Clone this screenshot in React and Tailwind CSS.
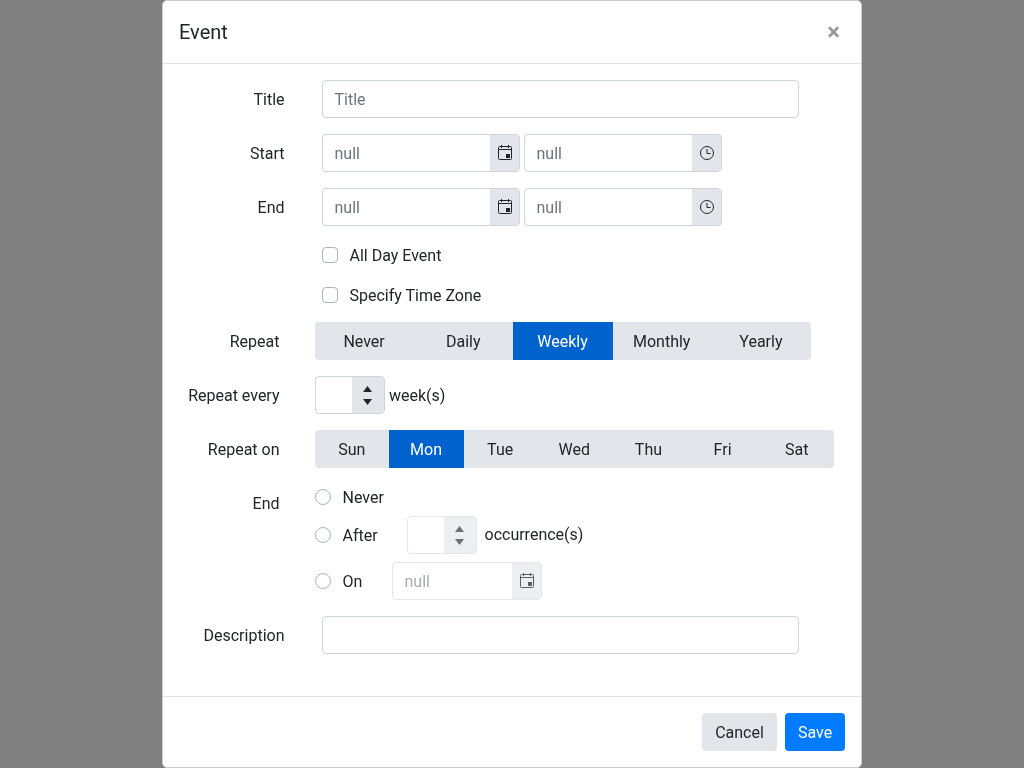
const CalendarIcon = () => (
  <svg width="14" height="16" viewBox="0 0 14 16" className="ml-px" fill="none" stroke="currentColor">
    <rect x="0.5" y="1.5" width="13" height="13" rx="1" />
    <path d="M0.5 4.5h13" />
    <path d="M3.5 0v3M10.5 0v3" />
    <rect x="8" y="9" width="4" height="4" fill="currentColor" stroke="none" />
  </svg>
);

const ClockIcon = () => (
  <svg width="16" height="16" viewBox="0 0 16 16" fill="none" stroke="currentColor">
    <circle cx="8" cy="8" r="6.5" />
    <path d="M8 4v4.5h3.5" />
  </svg>
);

const Spinner = ({ faded }) => (
  <div
    className={`w-8 flex flex-col items-center justify-center gap-[7px] pr-px ${
      faded ? "bg-[#eceef1] text-[#6c6f72]" : "bg-[#e2e6ea] text-[#212529]"
    }`}>
    <svg width="9" height="6" viewBox="0 0 9 6">
      <path d="M4.5 0L9 6H0z" fill="currentColor" />
    </svg>
    <svg width="9" height="6" viewBox="0 0 9 6">
      <path d="M4.5 6L0 0h9z" fill="currentColor" />
    </svg>
  </div>
);

const DateInput = ({ children, width = "w-[198px]", faded }) => (
  <div
    className={`${width} h-[38px] flex border rounded-[4px] overflow-hidden ${
      faded ? "border-[#e3e6ea]" : "border-[#ced4da]"
    }`}>
    <div className={`flex-1 pl-[11.5px] leading-[38px] ${faded ? "text-[#a6acb2]" : "text-[#6c757d]"}`}>null</div>
    <div
      className={`w-[29px] flex items-center justify-center ${
        faded ? "bg-[#eceef1] text-[#5c5f62]" : "bg-[#e2e6ea] text-[#212529]"
      }`}>
      {children}
    </div>
  </div>
);

const FormRow = ({ label, children }) => (
  <div className="flex items-center h-[38px] mb-4">
    <label className="w-[105.5px] text-right pt-[2px]">{label}</label>
    <div className="ml-[37.5px] flex items-center gap-1">{children}</div>
  </div>
);

const RepeatRow = ({ label, children }) => (
  <div className="flex items-center h-[38px] mb-4">
    <label className="w-[100.5px] text-right pt-[2px]">{label}</label>
    <div className="ml-[35.5px] flex items-center">{children}</div>
  </div>
);

const Segmented = ({ items, active, width }) => (
  <div className={`flex h-[38px] rounded-[4px] overflow-hidden ${width}`}>
    {items.map((item) => (
      <div
        key={item}
        className={`flex-1 flex items-center justify-center pt-[2px] pr-px ${
          item === active ? "bg-[#0062cc] text-white" : "bg-[#e2e6ea] text-[#212529]"
        }`}>
        {item}
      </div>
    ))}
  </div>
);

const CheckRow = ({ label }) => (
  <div className="flex items-center h-[25px] pt-px mb-[15px] ml-[143px]">
    <span className="w-4 h-4 rounded-[4px] border border-[#adb5bd] bg-white"></span>
    <span className="ml-[11.5px] pt-[2px]">{label}</span>
  </div>
);

const Radio = () => <span className="w-4 h-4 rounded-full border border-[#adb5bd] bg-white shrink-0"></span>;

export default function App() {
  return (
    <div className="h-screen overflow-hidden bg-[#808080] flex justify-center font-['Roboto',sans-serif] text-base text-[#212529]">
      <div className="w-[700px] h-[768px] bg-white border border-[#cccccc] rounded-[5px] flex flex-col [will-change:transform]">
        {/* Header */}
        <div className="h-[63px] shrink-0 flex items-center justify-between px-4 border-b border-[#dee2e6]">
          <h5 className="text-xl leading-6">Event</h5>
          <span className="text-2xl leading-none font-bold text-black opacity-40 mr-[5px] [text-shadow:0_1px_0_#fff]">×</span>
        </div>

        {/* Body */}
        <div className="flex-1 pt-4 px-4">
          <FormRow label="Title">
            <div className="w-[477px] h-[38px] border border-[#ced4da] rounded-[4px] pl-[11.5px] leading-[38px] text-[#6c757d]">
              Title
            </div>
          </FormRow>
          <FormRow label="Start">
            <DateInput>
              <CalendarIcon />
            </DateInput>
            <DateInput>
              <ClockIcon />
            </DateInput>
          </FormRow>
          <FormRow label="End">
            <DateInput>
              <CalendarIcon />
            </DateInput>
            <DateInput>
              <ClockIcon />
            </DateInput>
          </FormRow>
          <CheckRow label="All Day Event" />
          <CheckRow label="Specify Time Zone" />

          <RepeatRow label="Repeat">
            <Segmented items={["Never", "Daily", "Weekly", "Monthly", "Yearly"]} active="Weekly" width="w-[496px]" />
          </RepeatRow>
          <RepeatRow label="Repeat every">
            <div className="w-[70px] h-[38px] flex border border-[#ced4da] rounded-[4px] overflow-hidden">
              <div className="flex-1"></div>
              <Spinner />
            </div>
            <span className="ml-1 pt-[2px]">week(s)</span>
          </RepeatRow>
          <RepeatRow label="Repeat on">
            <div className="ml-[0.3px]">
              <Segmented items={["Sun", "Mon", "Tue", "Wed", "Thu", "Fri", "Sat"]} active="Mon" width="w-[519px]" />
            </div>
          </RepeatRow>

          <div className="flex mb-4">
            <label className="w-[100.5px] text-right leading-[40px]">End</label>
            <div className="ml-[35.5px] flex flex-col">
              <div className="h-[26px] flex items-center mb-[6px]">
                <Radio />
                <span className="ml-[11.5px] pt-[2px]">Never</span>
              </div>
              <div className="h-[38px] flex items-center mb-2">
                <Radio />
                <span className="ml-[11.5px] w-[64.5px] pt-[2px]">After</span>
                <div className="w-[70px] h-[38px] flex border border-[#e3e6ea] rounded-[4px] overflow-hidden">
                  <div className="flex-1"></div>
                  <Spinner faded />
                </div>
                <span className="ml-[7.5px]">occurrence(s)</span>
              </div>
              <div className="h-[38px] flex items-center">
                <Radio />
                <span className="ml-[11.5px] w-[49.5px] pt-[2px]">On</span>
                <DateInput width="w-[150px]" faded>
                  <CalendarIcon />
                </DateInput>
              </div>
            </div>
          </div>

          <FormRow label="Description">
            <div className="w-[477px] h-[38px] border border-[#ced4da] rounded-[4px]"></div>
          </FormRow>
        </div>

        {/* Footer */}
        <div className="shrink-0 border-t border-[#dee2e6] p-4 flex justify-end gap-2">
          <button className="w-[75px] h-[38px] pt-[2px] rounded-[4px] bg-[#e2e6ea] text-[#212529]">Cancel</button>
          <button className="w-[60px] h-[38px] pt-[2px] rounded-[4px] bg-[#007bff] text-white">Save</button>
        </div>
      </div>
    </div>
  );
}
